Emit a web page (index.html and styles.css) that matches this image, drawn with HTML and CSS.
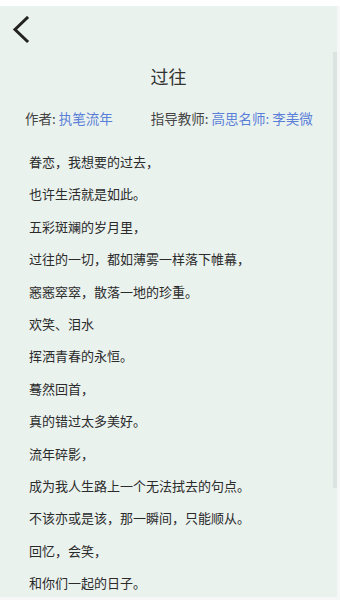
FILE: index.html
```html
<!DOCTYPE html>
<html lang="zh">
<head>
<meta charset="utf-8">
<title>过往</title>
<link rel="stylesheet" href="styles.css">
</head>
<body>
<div class="screen">
  <div class="topbar">
    <svg class="back" width="20" height="32" viewBox="0 0 20 32" aria-label="返回">
      <polyline points="16,2 4,13.5 16,25" fill="none" stroke="#222" stroke-width="3" stroke-linecap="square" stroke-linejoin="miter"/>
    </svg>
  </div>
  <h1 class="title">过往</h1>
  <div class="meta">
    <span class="meta-item">作者: <span class="link">执笔流年</span></span>
    <span class="meta-item">指导教师: <span class="link">高思名师: 李美微</span></span>
  </div>
  <div class="poem">
    <p>眷恋，我想要的过去，</p>
    <p>也许生活就是如此。</p>
    <p>五彩斑斓的岁月里，</p>
    <p>过往的一切，都如薄雾一样落下帷幕，</p>
    <p>窸窸窣窣，散落一地的珍重。</p>
    <p>欢笑、泪水</p>
    <p>挥洒青春的永恒。</p>
    <p>蓦然回首，</p>
    <p>真的错过太多美好。</p>
    <p>流年碎影，</p>
    <p>成为我人生路上一个无法拭去的句点。</p>
    <p>不该亦或是该，那一瞬间，只能顺从。</p>
    <p>回忆，会笑，</p>
    <p>和你们一起的日子。</p>
  </div>
  <div class="scrollbar"></div>
</div>
</body>
</html>
```

FILE: styles.css
```css
html, body {
  margin: 0;
  padding: 0;
  background: #f7f7f7;
}
body {
  width: 340px;
  height: 600px;
  overflow: hidden;
  font-family: "Noto Sans CJK SC", "Noto Sans", sans-serif;
  border-top: 6px solid #ffffff;
  box-sizing: border-box;
}
.screen {
  position: relative;
  width: 337px;
  height: 591px;
  background: #eaf2ee;
  overflow: hidden;
}
.topbar {
  height: 46px;
  padding: 10px 0 0 11px;
  box-sizing: border-box;
}
.back {
  display: block;
}
.title {
  margin: 12px 0 0;
  text-align: center;
  font-size: 18px;
  line-height: 24px;
  font-weight: 400;
  color: #333;
}
.meta {
  display: flex;
  gap: 38px;
  margin-top: 20px;
  padding-left: 25px;
  font-size: 13.5px;
  line-height: 20px;
  color: #444;
}
.link {
  color: #5a7fd8;
}
.poem {
  margin-top: 18px;
  padding-left: 29px;
  font-size: 13px;
  color: #2b2b2b;
}
.poem p {
  margin: 0;
  line-height: 32.4px;
}
.scrollbar {
  position: absolute;
  right: 0;
  top: 46px;
  width: 4px;
  height: 436px;
  background: #dbe4e0;
}
```
